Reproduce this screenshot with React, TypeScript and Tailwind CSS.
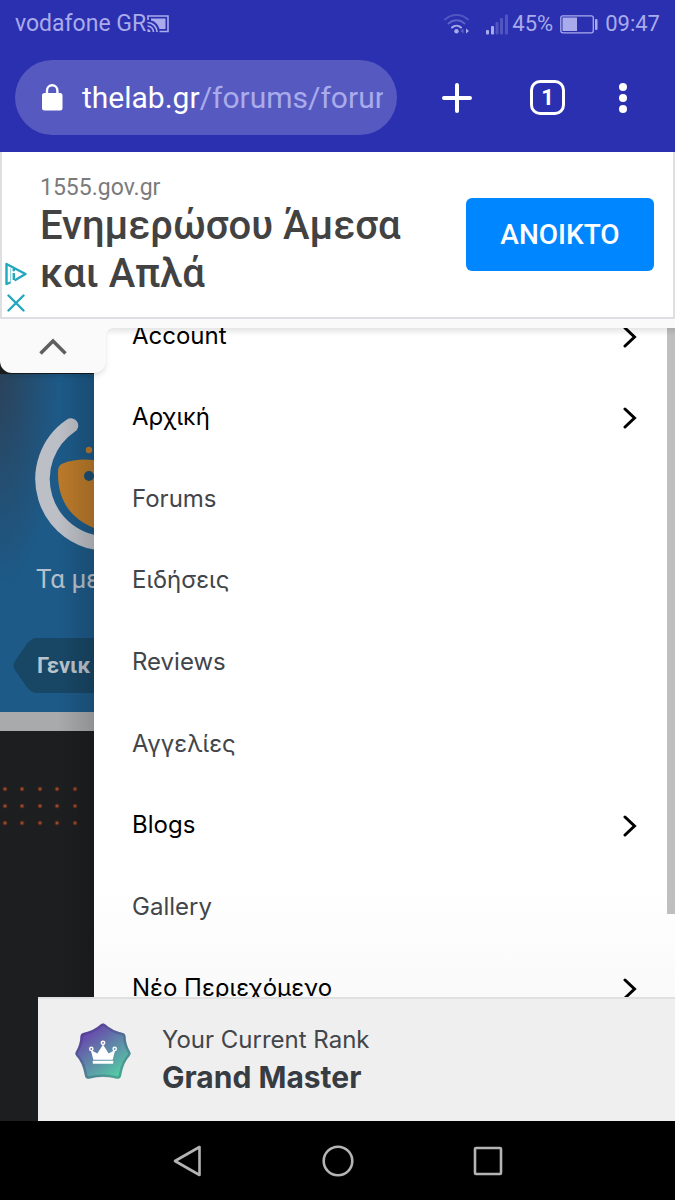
import clsx from "clsx";

interface MenuItem {
  label: string;
  hasChildren?: boolean;
}

const menuItems: MenuItem[] = [
  { label: "Account", hasChildren: true },
  { label: "Αρχική", hasChildren: true },
  { label: "Forums" },
  { label: "Ειδήσεις" },
  { label: "Reviews" },
  { label: "Αγγελίες" },
  { label: "Blogs", hasChildren: true },
  { label: "Gallery" },
  { label: "Νέο Περιεχόμενο", hasChildren: true },
];

const dotColumns = [5, 22, 40, 57, 75];
const dotRows = [4, 21, 38];

const CastIcon = () => (
  <svg width="22" height="18" viewBox="0 0 22 18" fill="none">
    <path d="M1 5V1h20v15.500h-8.500" stroke="currentColor" strokeWidth="1.600" />
    <path d="M4 3.500h14.500v10.500h-6C11 9.500 8.500 6.500 4 5.500z" fill="currentColor" />
    <path
      d="M0.500 7.500c5.200 0 9.500 4.300 9.500 9.500M0.500 11c3.300 0 6 2.700 6 6"
      stroke="currentColor"
      strokeWidth="1.700"
    />
    <path d="M0.500 14c1.700 0 3 1.300 3 3h-3z" fill="currentColor" />
  </svg>
);

const WifiIcon = () => (
  <svg width="25" height="22" viewBox="0 0 25 22" fill="none">
    <g stroke="currentColor" strokeWidth="2" strokeLinecap="round">
      <path d="M1 6.500C7.500 0.500 17.500 0.500 24 6.500" opacity="0.300" />
      <path d="M4.500 10.500c4.700-4.300 11.300-4.300 16 0" opacity="0.400" />
      <path d="M8 14.500c2.600-2.500 6.400-2.500 9 0" />
    </g>
    <circle cx="12.500" cy="18.300" r="2.200" fill="currentColor" />
    <path d="M22 15.500l3 2.500-3 2.500z" fill="currentColor" />
    <path d="M19.500 15.500v5l-3-2.500z" fill="currentColor" opacity="0.400" />
  </svg>
);

const SignalIcon = () => (
  <svg width="22" height="21" viewBox="0 0 22 21" fill="currentColor">
    <rect y="16" width="3" height="4.500" rx="1" />
    <rect x="5" y="12" width="3" height="8.500" rx="1" />
    <g opacity="0.300">
      <rect x="9.500" y="8" width="3" height="12.500" rx="1" />
      <rect x="14" y="4" width="3" height="16.500" rx="1" />
      <rect x="19" y="0.500" width="3" height="20" rx="1" />
    </g>
  </svg>
);

const BatteryIcon = () => (
  <svg width="38" height="19" viewBox="0 0 38 19" fill="none">
    <rect x="0.800" y="0.800" width="32.500" height="17" rx="2" stroke="currentColor" strokeWidth="1.300" />
    <rect x="2.500" y="2.500" width="14.500" height="13.500" fill="currentColor" />
    <rect x="35" y="4" width="2.500" height="11" rx="1" fill="currentColor" />
  </svg>
);

const StatusBar = () => (
  <div className="flex h-12 items-center px-[15px] text-[23px] leading-6 text-[#a9abea]">
    <span>vodafone GR</span>
    <span className="ml-px">
      <CastIcon />
    </span>
    <div className="ml-auto flex items-center text-[22px]">
      <WifiIcon />
      <span className="mr-1 ml-[17px]">
        <SignalIcon />
      </span>
      <span>45%</span>
      <span className="mx-[7px]">
        <BatteryIcon />
      </span>
      <span>09:47</span>
    </div>
  </div>
);

const Toolbar = () => (
  <div className="flex items-center px-[15px] pt-3 pb-[17px]">
    <div className="flex h-[75px] min-w-0 flex-1 items-center rounded-full bg-[#565ac0] pr-[14px] pl-[26px]">
      <svg width="22" height="27" viewBox="0 0 22 27" className="shrink-0" fill="none">
        <rect x="1" y="9" width="20.500" height="17.500" rx="2.500" fill="white" />
        <path d="M6 10V6.500a5.200 5.200 0 0 1 10.400 0V10" stroke="white" strokeWidth="2.400" />
      </svg>
      <div className="ml-[19px] overflow-hidden text-[30px] leading-9 whitespace-nowrap text-[#a9abea]">
        <span className="text-white">thelab.gr</span>/forums/forum
      </div>
    </div>
    <div className="flex shrink-0 items-center text-white">
      <button aria-label="New tab" className="ml-11">
        <svg width="32" height="32" viewBox="0 0 32 32" stroke="white" strokeWidth="4" strokeLinecap="round">
          <path d="M16 3v26M3 16h26" />
        </svg>
      </button>
      <button
        aria-label="Open tabs"
        className="ml-[57px] flex size-[35px] items-center justify-center rounded-[10px] border-[3px] border-white text-[22px] leading-6 font-bold"
      >
        1
      </button>
      <button aria-label="More" className="mr-8 ml-[53px]">
        <svg width="10" height="32" viewBox="0 0 10 32" fill="white">
          <circle cx="5" cy="5" r="4" />
          <circle cx="5" cy="16" r="4" />
          <circle cx="5" cy="27" r="4" />
        </svg>
      </button>
    </div>
  </div>
);

const AdBanner = () => (
  <section className="border-b-[9px] border-[#fafafa]">
    <div className="relative flex items-start justify-between border-x-2 border-b-2 border-[#dedfe3] bg-white pt-[22px] pr-[19px] pb-[19px] pl-[38px]">
      <div>
        <p className="text-[23px] leading-7 text-[#7b7b7b]">1555.gov.gr</p>
        <h2 className="text-[40px] leading-[48px] font-medium text-[#424242]">
          Ενημερώσου Άμεσα
          <br />
          και Απλά
        </h2>
      </div>
      <button className="mt-6 h-[73px] w-[188px] rounded-md bg-[#0087ff] text-[28px] font-medium text-white">
        ΑΝΟΙΚΤΟ
      </button>
      <div className="absolute bottom-[5px] left-[3px] flex flex-col items-center gap-2 text-[#23a7bd]">
        <svg width="22" height="24" viewBox="0 0 22 24" fill="none" stroke="currentColor" strokeWidth="2.400">
          <path d="M5.500 20.500l-4 1.500V2l19 10-11 6.500" strokeLinejoin="round" />
          <path d="M5.500 6.500v14" strokeWidth="1" opacity="0.500" />
          <path d="M8.800 11v7" strokeWidth="2.400" />
          <circle cx="8.800" cy="8" r="1.400" fill="currentColor" stroke="none" />
        </svg>
        <button aria-label="Close ad" className="flex">
          <svg width="18" height="18" viewBox="0 0 18 18" stroke="currentColor" strokeWidth="2.400" strokeLinecap="round">
            <path d="M1.500 1.500l15 15M16.500 1.500l-15 15" />
          </svg>
        </button>
      </div>
    </div>
  </section>
);

// Part of the forum page left visible beside the open drawer
const PageBehind = () => (
  <div className="relative w-[94px] shrink-0 overflow-hidden bg-[#1c1e20] pt-[46px] whitespace-nowrap">
    <div className="border-b-[19px] border-[#a9aaac] bg-[#1d5a88] bg-radial-[at_0%_0%] from-[#2b425a] to-[#1d5a88] to-45% pb-[19px]">
      <svg width="94" height="187" viewBox="0 0 94 187" fill="none">
        <path d="M71 51.500A64.500 64.500 0 0 0 107 169.500" stroke="#bcc0c6" strokeWidth="14.500" strokeLinecap="round" />
        <path d="M94 86C82 84.500 72 86 64 89c-5 2-6 4-6 11 0 28 14 45 36 54z" fill="#bb7a2a" />
        <circle cx="89" cy="76" r="3.200" fill="#bb7a2a" />
        <circle cx="89" cy="102" r="5" fill="#1c4f75" />
      </svg>
      <p className="pl-9 text-[26px] leading-9 text-[#b4c0cb]">Τα με</p>
      <div className="mt-[41px] ml-[13px] flex text-[#184766]">
        <svg width="24" height="55" viewBox="0 0 24 55" className="shrink-0" fill="currentColor">
          <path d="M24 0C19 0 16 3 13 7L2 23C0 26 0 29 2 32l11 16c3 4 6 7 11 7z" />
        </svg>
        <span className="h-[55px] flex-1 bg-[#184766] text-[22px] leading-[55px] font-bold text-[#b9c4cd]">
          Γενικ
        </span>
      </div>
    </div>
    <svg className="mt-[54px]" width="94" height="44" viewBox="0 0 94 44">
      {dotRows.map((y) =>
        dotColumns.map((x) => (
          <circle key={`${x}-${y}`} cx={x} cy={y} r="2" fill="#8c5030" stroke="#5a2414" />
        ))
      )}
    </svg>
    <div className="absolute inset-y-0 right-0 w-9 bg-linear-to-r from-transparent to-black/15" />
  </div>
);

const Drawer = () => (
  <nav className="flex min-w-0 flex-1 overflow-hidden bg-linear-to-b from-white from-70% to-[#f9f9fa] to-85% font-[Inter,'Noto_Sans',sans-serif]">
    <ul className="-mt-[33px] mb-[92px] grid flex-1 auto-rows-fr pr-[30px] pl-[38px]">
      {menuItems.map((item) => (
        <li key={item.label} className="flex">
          <a
            href="#"
            className={clsx(
              "flex flex-1 items-center justify-between text-[24px] leading-8",
              item.hasChildren ? "text-black" : "text-[#424549]"
            )}
          >
            {item.label}
            {item.hasChildren && (
              <svg width="14" height="22" viewBox="0 0 14 22" fill="none" className="mt-0.5">
                <path d="M2 2l9.500 9L2 20" stroke="black" strokeWidth="3" strokeLinecap="round" />
              </svg>
            )}
          </a>
        </li>
      ))}
    </ul>
    <div className="h-[586px] w-2 bg-[#bfbfbf]" />
  </nav>
);

const RankPanel = () => (
  <aside className="absolute right-0 bottom-0 left-[38px] flex h-[124px] border-t-2 border-[#dfe0e2] bg-[#efeff0] pt-[23px] pl-9 font-[Inter,sans-serif]">
    <svg width="58" height="58" viewBox="1 0 56 57">
      <defs>
        <linearGradient id="rank" x1="0.200" y1="0.100" x2="0.800" y2="0.900">
          <stop offset="0" stopColor="#6a3fae" />
          <stop offset="1" stopColor="#55c9a4" />
        </linearGradient>
      </defs>
      <path
        d="M27 2.200Q29 0.800 31 2.200Q38 8.600 48.500 10.800Q51 11.400 51.200 14Q51.200 22 55.800 29.500Q57 31.500 55.300 33.200Q49 39.500 46.800 52.500Q46.300 56 43 55.700Q29 52 15 55.700Q11.700 56 11.200 52.500Q9 39.500 2.700 33.200Q1 31.500 2.200 29.500Q6.800 22 6.800 14Q7 11.400 9.500 10.800Q20 8.600 27 2.200z"
        fill="url(#rank)"
      />
      <path
        d="M27.500 3.200Q29 2 30.500 3.200Q38 9.600 47.500 11.800Q50 12.400 50 14.500Q50.200 22.500 54.600 29.800Q55.500 31.300 54.300 32.700Q48 39.500 45.700 52Q45.200 54.800 42.700 54.500Q29 51 15.300 54.500Q12.800 54.800 12.300 52Q10 39.500 3.700 32.700Q2.500 31.300 3.400 29.800Q7.800 22.500 8 14.500Q8 12.400 10.500 11.800Q20 9.600 27.500 3.200z"
        fill="none"
        stroke="#23305a"
        strokeOpacity="0.250"
        strokeWidth="2.500"
      />
      <g fill="white">
        <path d="M17 27.500l6.500 3.500L29 22l5.500 9 6.500-3.500L38.500 37h-19z" />
        <rect x="19" y="38" width="20" height="3" rx="0.500" />
        <circle cx="29" cy="20.500" r="2.400" />
        <circle cx="17.500" cy="26.500" r="2.300" />
        <circle cx="40.500" cy="26.500" r="2.300" />
      </g>
      <circle cx="29" cy="20.500" r="0.900" fill="#6468b0" />
      <circle cx="17.500" cy="26.500" r="0.900" fill="#6468b0" />
      <circle cx="40.500" cy="26.500" r="0.900" fill="#6492ad" />
    </svg>
    <div className="ml-[30px]">
      <p className="text-[24px] leading-9 text-[#424549]">Your Current Rank</p>
      <p className="text-[30px] leading-[38px] font-bold text-[#373c42]">Grand Master</p>
    </div>
  </aside>
);

const SystemNav = () => (
  <footer className="flex h-[79px] items-center justify-center gap-[118px] bg-black">
    <button aria-label="Back">
      <svg width="32" height="32" viewBox="0 0 32 32" fill="none" stroke="#b4b4b4" strokeWidth="2.600" strokeLinejoin="round">
        <path d="M27.500 2v28L3 16z" />
      </svg>
    </button>
    <button aria-label="Home">
      <svg width="32" height="32" viewBox="0 0 32 32" fill="none" stroke="#b4b4b4" strokeWidth="2.600">
        <circle cx="16" cy="16" r="14.300" />
      </svg>
    </button>
    <button aria-label="Recent apps">
      <svg width="32" height="32" viewBox="0 0 32 32" fill="none" stroke="#b4b4b4" strokeWidth="2.600">
        <rect x="3" y="3" width="26" height="26" rx="1" />
      </svg>
    </button>
  </footer>
);

export default function App() {
  return (
    <div className="flex min-h-screen flex-col font-[Roboto,'Noto_Sans',sans-serif]">
      <header className="bg-[#2b30b0]">
        <StatusBar />
        <Toolbar />
      </header>
      <AdBanner />
      <main className="relative flex flex-1 overflow-hidden">
        <PageBehind />
        <Drawer />
        <div className="pointer-events-none absolute inset-x-0 top-0 h-2 bg-linear-to-b from-black/10 to-transparent" />
        <button
          aria-label="Collapse ad"
          className="absolute top-0 left-0 flex h-[45px] w-[106px] justify-center rounded-b-xl bg-[#fafafa] pt-2.5 shadow-md"
        >
          <svg width="28" height="18" viewBox="0 0 28 18" fill="none" stroke="#5f5f5f" strokeWidth="3.500">
            <path d="M1.500 15.500L14 3l12.500 12.500" />
          </svg>
          <svg className="absolute top-0 left-full" width="8" height="8" viewBox="0 0 8 8" fill="#fafafa">
            <path d="M0 0h8C3 0 0 3 0 8z" />
          </svg>
        </button>
        <RankPanel />
      </main>
      <SystemNav />
    </div>
  );
}
